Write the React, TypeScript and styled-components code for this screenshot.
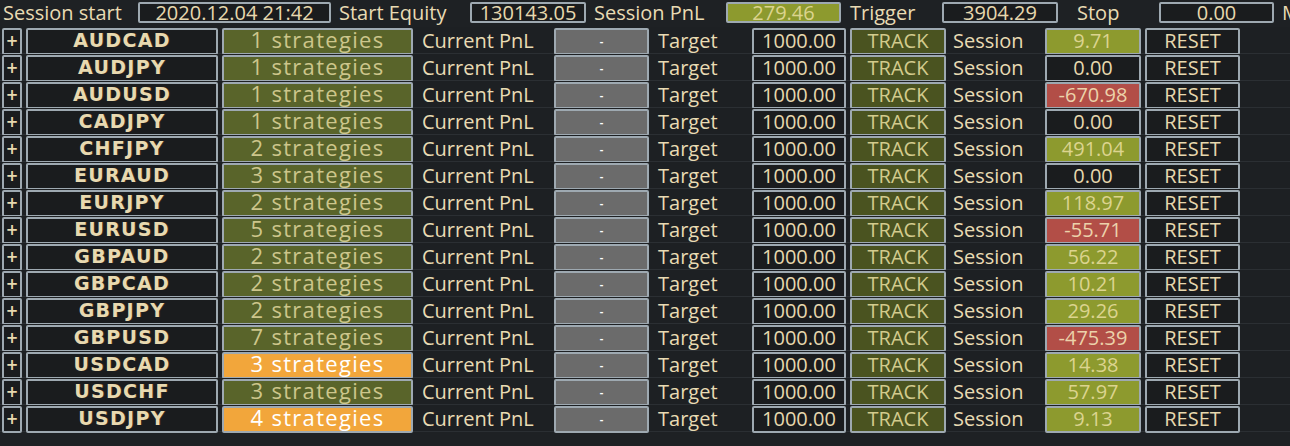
import React from 'react'
import styled, { createGlobalStyle, css } from 'styled-components'

const GlobalStyle = createGlobalStyle`
	html, body {
		margin: 0;
		padding: 0;
		background: #1e2124;
		overflow: hidden;
	}

	body {
		width: 1290px;
		height: 446px;
		font-family: 'Open Sans', 'DejaVu Sans', sans-serif;
	}
`

type Tone = 'dark' | 'olive' | 'orange' | 'track' | 'green' | 'red' | 'gray'

const tones: Record<Tone, { bg: string; fg: string }> = {
	dark: { bg: '#1a1c1e', fg: '#e7d8ae' },
	olive: { bg: '#59642a', fg: '#cdc68b' },
	orange: { bg: '#f2a63b', fg: '#ffffff' },
	track: { bg: '#4a5320', fg: '#d3cb8d' },
	green: { bg: '#8d9a2e', fg: '#dcd48f' },
	red: { bg: '#b24e47', fg: '#ecd2aa' },
	gray: { bg: '#6b6b6b', fg: '#ffffff' }
}

const boxBase = css`
	box-sizing: border-box;
	height: 100%;
	border: 2px solid #9ea9b1;
	border-radius: 2px;
	display: flex;
	align-items: center;
	justify-content: center;
	white-space: nowrap;
`

const Page = styled.div`
	width: 1290px;
	height: 446px;
	background: #1e2124;
	overflow: hidden;
`

// top row with session summary
const Header = styled.div`
	display: flex;
	align-items: flex-start;
	height: 27px;
	padding-top: 2px;
	box-sizing: border-box;
	overflow: hidden;
`

const HeaderLabel = styled.div<{ $w: number; $pl?: number }>`
	flex: 0 0 ${p => p.$w}px;
	padding-left: ${p => p.$pl ?? 8}px;
	box-sizing: border-box;
	color: #e9dbb3;
	font-size: 20px;
	line-height: 21px;
	white-space: nowrap;
`

const HeaderField = styled.div<{ $w: number; $tone?: Tone }>`
	${boxBase};
	flex: 0 0 ${p => p.$w}px;
	height: 21px;
	background: ${p => tones[p.$tone ?? 'dark'].bg};
	color: ${p => tones[p.$tone ?? 'dark'].fg};
	font-size: 20px;
	line-height: 17px;
`

const List = styled.div`
	display: flex;
	flex-direction: column;
`

const Row = styled.div`
	display: grid;
	grid-template-columns: 20px 192px 191px 133px 95px 95px 94px 96px 91px 96px 95px;
	column-gap: 4px;
	padding: 1px 0 2px 2px;
	height: 27px;
	box-sizing: border-box;
	border-bottom: 1px solid #2b2f33;
	background: #1d2023;
`

const PlusBox = styled.div`
	${boxBase};
	background: #1a1c1e;
	color: #e7d8ae;
	font-family: 'DejaVu Sans', sans-serif;
	font-weight: bold;
	font-size: 15px;
	padding-bottom: 2px;
`

const SymbolBox = styled.div`
	${boxBase};
	background: #1a1c1e;
	color: #e8d9b0;
	font-family: 'DejaVu Sans', sans-serif;
	font-weight: bold;
	font-size: 19px;
	line-height: 20px;
	letter-spacing: 1.3px;
	padding-bottom: 3px;
	text-shadow: 1px 0 0 #3a3020;
`

const Cell = styled.div<{ $tone: Tone }>`
	${boxBase};
	background: ${p => tones[p.$tone].bg};
	color: ${p => tones[p.$tone].fg};
	font-size: 20px;
	line-height: 18px;
	padding-bottom: 2px;
`

// the strategy count overflows the button, the descenders get clipped
const StrategyCell = styled(Cell)`
	font-size: 22px;
	letter-spacing: 1.3px;
	align-items: flex-start;
	overflow: hidden;
	padding-bottom: 0;
	line-height: 18px;
`

const DashCell = styled(Cell)`
	font-size: 11px;
	font-weight: bold;
`

const Label = styled.div`
	display: flex;
	align-items: center;
	padding: 0 0 2px 5px;
	color: #e9dbb3;
	font-size: 20px;
	line-height: 18px;
	white-space: nowrap;
`

const SessionLabel = styled(Label)`
	padding-left: 3px;
`

type Pair = {
	symbol: string
	count: number
	hot?: boolean
	session: string
}

const pairs: Pair[] = [
	{ symbol: 'AUDCAD', count: 1, session: '9.71' },
	{ symbol: 'AUDJPY', count: 1, session: '0.00' },
	{ symbol: 'AUDUSD', count: 1, session: '-670.98' },
	{ symbol: 'CADJPY', count: 1, session: '0.00' },
	{ symbol: 'CHFJPY', count: 2, session: '491.04' },
	{ symbol: 'EURAUD', count: 3, session: '0.00' },
	{ symbol: 'EURJPY', count: 2, session: '118.97' },
	{ symbol: 'EURUSD', count: 5, session: '-55.71' },
	{ symbol: 'GBPAUD', count: 2, session: '56.22' },
	{ symbol: 'GBPCAD', count: 2, session: '10.21' },
	{ symbol: 'GBPJPY', count: 2, session: '29.26' },
	{ symbol: 'GBPUSD', count: 7, session: '-475.39' },
	{ symbol: 'USDCAD', count: 3, hot: true, session: '14.38' },
	{ symbol: 'USDCHF', count: 3, session: '57.97' },
	{ symbol: 'USDJPY', count: 4, hot: true, session: '9.13' }
]

// pick the colour of the session pnl box
const sessionTone = (value: string): Tone => {
	const n = parseFloat(value)
	if(n > 0) return 'green'
	if(n < 0) return 'red'
	return 'dark'
}

const PairRow = ({ pair }: { pair: Pair }) => (
	<Row>
		<PlusBox>+</PlusBox>
		<SymbolBox>{pair.symbol}</SymbolBox>
		<StrategyCell $tone={pair.hot ? 'orange' : 'olive'}>
			{pair.count} strategies
		</StrategyCell>
		<Label>Current PnL</Label>
		<DashCell $tone="gray">-</DashCell>
		<Label>Target</Label>
		<Cell $tone="dark">1000.00</Cell>
		<Cell $tone="track">TRACK</Cell>
		<SessionLabel>Session</SessionLabel>
		<Cell $tone={sessionTone(pair.session)}>{pair.session}</Cell>
		<Cell $tone="dark">RESET</Cell>
	</Row>
)

const App = () => (
	<Page>
		<GlobalStyle />
		<Header>
			<HeaderLabel $w={138} $pl={3}>Session start</HeaderLabel>
			<HeaderField $w={193}>2020.12.04 21:42</HeaderField>
			<HeaderLabel $w={139}>Start Equity</HeaderLabel>
			<HeaderField $w={116}>130143.05</HeaderField>
			<HeaderLabel $w={140}>Session PnL</HeaderLabel>
			<HeaderField $w={115} $tone="green">279.46</HeaderField>
			<HeaderLabel $w={101} $pl={9}>Trigger</HeaderLabel>
			<HeaderField $w={116}>3904.29</HeaderField>
			<HeaderLabel $w={101} $pl={19}>Stop</HeaderLabel>
			<HeaderField $w={115}>0.00</HeaderField>
			<HeaderLabel $w={80}>Max DD</HeaderLabel>
		</Header>
		<List>
			{pairs.map(p => <PairRow key={p.symbol} pair={p} />)}
		</List>
	</Page>
)

export default App
